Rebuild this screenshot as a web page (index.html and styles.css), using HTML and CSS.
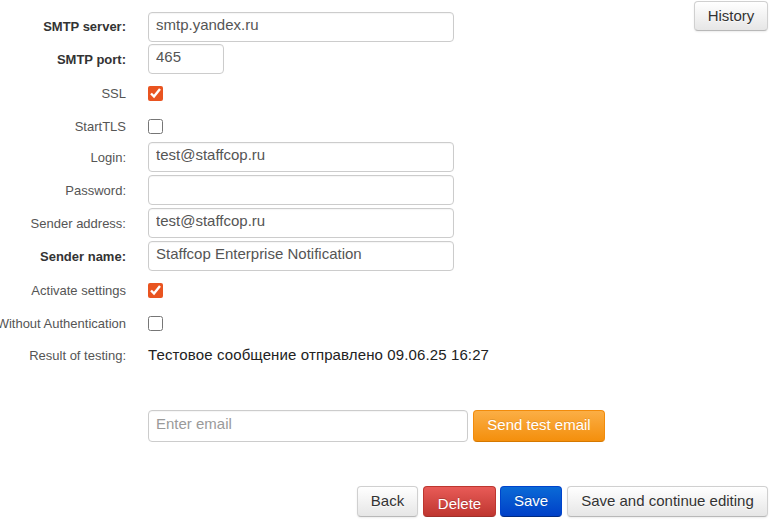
FILE: index.html
```html
<!DOCTYPE html>
<html>
<head>
<meta charset="utf-8">
<link rel="stylesheet" href="styles.css">
</head>
<body>
<div class="page">
  <div class="top">
    <form class="fields">
      <div class="row r-server"><label class="lbl bold">SMTP server:</label><input class="inp wide" type="text" value="smtp.yandex.ru"></div>
      <div class="row r-port"><label class="lbl bold">SMTP port:</label><input class="inp port" type="text" value="465"></div>
      <div class="row r-ssl"><label class="lbl">SSL</label><input class="chk" type="checkbox" checked></div>
      <div class="row r-tls"><label class="lbl">StartTLS</label><input class="chk" type="checkbox"></div>
      <div class="row r-input"><label class="lbl">Login:</label><input class="inp wide" type="text" value="test@staffcop.ru"></div>
      <div class="row r-input"><label class="lbl">Password:</label><input class="inp wide" type="password" value=""></div>
      <div class="row r-input"><label class="lbl">Sender address:</label><input class="inp wide" type="text" value="test@staffcop.ru"></div>
      <div class="row r-input"><label class="lbl bold">Sender name:</label><input class="inp wide" type="text" value="Staffcop Enterprise Notification"></div>
      <div class="row r-act"><label class="lbl">Activate settings</label><input class="chk" type="checkbox" checked></div>
      <div class="row r-noauth"><label class="lbl">Without Authentication</label><input class="chk" type="checkbox"></div>
      <div class="row r-result"><label class="lbl">Result of testing:</label><span class="result">Тестовое сообщение отправлено 09.06.25 16:27</span></div>
    </form>
    <button class="btn btn-default history" type="button">History</button>
  </div>
  <div class="test-row">
    <input class="inp email" type="text" placeholder="Enter email">
    <button class="btn btn-warning send" type="button">Send test email</button>
  </div>
  <div class="submit-row">
    <button class="btn btn-default back" type="button">Back</button>
    <button class="btn btn-danger delete" type="button"><span class="dtext">Delete</span></button>
    <button class="btn btn-primary save" type="button">Save</button>
    <button class="btn btn-default cont" type="button">Save and continue editing</button>
  </div>
</div>
</body>
</html>
```
FILE: styles.css
```css
* { box-sizing: border-box; }
html, body { margin: 0; padding: 0; background: #fff; }
body {
  font-family: "Liberation Sans", Arial, sans-serif;
  color: #333;
  width: 780px;
  height: 530px;
  overflow: hidden;
}
.page { padding: 0 12px 0 0; }
.top {
  display: flex;
  justify-content: space-between;
  align-items: flex-start;
}
.fields {
  display: flex;
  flex-direction: column;
  padding-top: 12px;
  margin: 0;
}
.row {
  display: grid;
  grid-template-columns: 126px auto;
  column-gap: 22px;
  align-items: start;
}
.lbl {
  display: flex;
  justify-content: flex-end;
  font-size: 13px;
  color: #555;
  white-space: nowrap;
  line-height: 15px;
}
.lbl.bold { font-weight: bold; color: #333; }
.r-server { height: 32px; }
.r-port { height: 33px; }
.r-input { height: 33px; }
.r-server .lbl { margin-top: 7px; }
.r-port .lbl, .r-input .lbl { margin-top: 8px; }
.r-ssl { height: 32px; }
.r-tls { height: 33px; }
.r-act { height: 32px; }
.r-noauth { height: 34px; }
.r-result { height: 30px; }
.r-ssl .lbl { margin-top: 9px; }
.r-tls .lbl { margin-top: 10px; }
.r-act .lbl { margin-top: 9px; }
.r-noauth .lbl { margin-top: 10px; }
.r-result .lbl { margin-top: 8px; }

.inp {
  font-family: "Liberation Sans", Arial, sans-serif;
  font-size: 15px;
  color: #555;
  height: 30px;
  padding: 1px 7px 7px;
  border: 1px solid #ccc;
  border-radius: 4px;
  background: #fff;
  box-shadow: inset 0 1px 1px rgba(0,0,0,0.04);
  outline: none;
  margin: 0;
}
.inp.wide { width: 306px; }
.inp.port { width: 76px; }
.inp::placeholder { color: #9a9a9a; }

.chk {
  margin: 0;
  width: 15px;
  height: 15px;
  accent-color: #e95420;
}
.r-ssl .chk { margin-top: 9px; }
.r-tls .chk { margin-top: 10px; }
.r-act .chk { margin-top: 9px; }
.r-noauth .chk { margin-top: 10px; }

.result {
  font-size: 15px;
  color: #222;
  margin-top: 6px;
  line-height: 18px;
  letter-spacing: 0.12px;
  white-space: nowrap;
}

.btn {
  font-family: "Liberation Sans", Arial, sans-serif;
  font-size: 15px;
  line-height: 19px;
  height: 31px;
  padding: 5px 13px;
  border-radius: 4px;
  border: 1px solid #ccc;
  cursor: pointer;
  margin: 0;
}
.btn-default {
  color: #333;
  background: linear-gradient(#ffffff, #e6e6e6);
  border-color: #d0d0d0 #d0d0d0 #b8b8b8;
  text-shadow: 0 1px 1px rgba(255,255,255,0.75);
  box-shadow: inset 0 1px 0 rgba(255,255,255,0.2), 0 1px 2px rgba(0,0,0,0.08);
}
.btn-danger {
  color: #fff;
  background: linear-gradient(#e85b57, #bf3630);
  border-color: #bd362f #bd362f #a0302a;
  text-shadow: 0 -1px 0 rgba(0,0,0,0.2);
}
.btn-primary {
  color: #fff;
  background: linear-gradient(#0a6ad6, #0040c8);
  border-color: #0044cc #0044cc #002a80;
  text-shadow: 0 -1px 0 rgba(0,0,0,0.2);
}
.btn-warning {
  color: #fff;
  background: linear-gradient(#fbae45, #f48f0c);
  border-color: #f28b0a #f28b0a #d57800;
  text-shadow: 0 -1px 0 rgba(0,0,0,0.1);
}

.history { margin-top: 1px; width: 74px; height: 30px; padding: 0 0 1px; }

.test-row {
  display: flex;
  gap: 5px;
  margin-top: 40px;
  padding-left: 148px;
}
.inp.email { width: 320px; height: 32px; }
.send { width: 132px; height: 32px; padding: 0 0 3px; }

.submit-row {
  display: flex;
  justify-content: flex-end;
  margin-top: 44px;
}
.back { width: 61px; padding: 0 0 2px; margin-right: 5px; }
.delete { width: 73px; padding: 0; margin-right: 4px; }
.delete .dtext { position: relative; top: 2px; }
.save { width: 62px; padding: 0 0 2px; margin-right: 5px; }
.cont { width: 201px; padding: 0 0 2px; }
```
